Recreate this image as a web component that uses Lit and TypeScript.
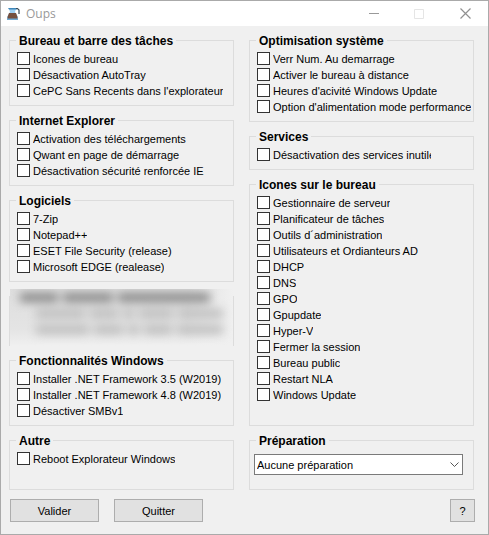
import { LitElement, html, css, nothing } from "lit";
import { customElement, property } from "lit/decorators.js";

interface Group {
  title: string;
  items: string[];
}

const LEFT_TOP: Group[] = [
  { title: "Bureau et barre des tâches", items: ["Icones de bureau", "Désactivation AutoTray", "CePC Sans Recents dans l'explorateur"] },
  { title: "Internet Explorer", items: ["Activation des téléchargements", "Qwant en page de démarrage", "Désactivation sécurité renforcée IE"] },
  { title: "Logiciels", items: ["7-Zip", "Notepad++", "ESET File Security (release)", "Microsoft EDGE (realease)"] },
];

const WINDOWS_FEATURES: Group = {
  title: "Fonctionnalités Windows",
  items: ["Installer .NET Framework 3.5 (W2019)", "Installer .NET Framework 4.8 (W2019)", "Désactiver SMBv1"],
};

const OTHER: Group = { title: "Autre", items: ["Reboot Explorateur Windows"] };

const SYSTEM: Group = {
  title: "Optimisation système",
  items: ["Verr Num. Au demarrage", "Activer le bureau à distance", "Heures d'acivité Windows Update", "Option d'alimentation mode performance"],
};

const SERVICES: Group = { title: "Services", items: ["Désactivation des services inutiles"] };

const DESKTOP: Group = {
  title: "Icones sur le bureau",
  items: [
    "Gestionnaire de serveur",
    "Planificateur de tâches",
    "Outils d´administration",
    "Utilisateurs et Ordianteurs AD",
    "DHCP",
    "DNS",
    "GPO",
    "Gpupdate",
    "Hyper-V",
    "Fermer la session",
    "Bureau public",
    "Restart NLA",
    "Windows Update",
  ],
};

@customElement("option-group")
export class OptionGroup extends LitElement {
  @property({ attribute: false }) group: Group | null = null;
  @property() heading = "";

  static styles = css`
    :host {
      display: flex;
      flex-direction: column;
    }
    .box {
      flex: 1;
      min-width: 0;
      margin: 0;
      padding: 3px 7px 6px;
      border: 1px solid #dcdcdc;
    }
    .legend {
      margin-left: -1px;
      padding: 2px 3px 0;
      font: bold 12px/13px "Liberation Sans", Arial, sans-serif;
      white-space: nowrap;
    }
    .row {
      display: flex;
      gap: 3px;
      height: 16px;
      width: fit-content;
      white-space: nowrap;
    }
    .check {
      appearance: none;
      flex: none;
      box-sizing: border-box;
      width: 13px;
      height: 13px;
      margin: 1px 0 0;
      border: 1px solid #333;
      background: #fff;
    }
    .check:checked {
      background: #333;
      box-shadow: inset 0 0 0 2px #fff;
    }
    .text {
      line-height: 17px;
      overflow: hidden;
    }
    :host([narrow]) .text {
      max-width: 158px;
    }
  `;

  render() {
    return html`
      <fieldset class="box">
        <legend class="legend">${this.group?.title ?? this.heading}</legend>
        ${this.group
          ? this.group.items.map(
              (item) => html`<label class="row"><input class="check" type="checkbox" /><span class="text">${item}</span></label>`
            )
          : nothing}
        <slot></slot>
      </fieldset>
    `;
  }
}

@customElement("app-root")
export class AppRoot extends LitElement {
  static styles = css`
    :host {
      display: block;
      font: 11px/16px "Liberation Sans", Arial, sans-serif;
      color: #000;
    }
    .window {
      box-sizing: border-box;
      min-height: 100vh;
      border: 1px solid #aaa;
      background: #f0f0f0;
    }
    .titlebar {
      display: flex;
      align-items: center;
      height: 25px;
      padding-left: 5px;
      background: #fff;
    }
    .title {
      flex: 1;
      margin: 0 0 0 6px;
      font: 12px/24px "Open Sans", "Noto Sans", sans-serif;
      color: #999;
    }
    .caption {
      display: flex;
      align-items: center;
      justify-content: center;
      width: 46px;
      height: 25px;
      padding: 0;
      border: 0;
      background: none;
    }
    .columns {
      display: grid;
      grid-template-columns: 1fr 1fr;
      gap: 15px;
      padding: 7px 14px 0 8px;
    }
    .column {
      display: flex;
      flex-direction: column;
      gap: 7px;
      min-width: 0;
    }
    .grow {
      flex: 1;
    }
    .last {
      min-height: 57px;
    }
    .redacted {
      box-sizing: border-box;
      height: 50px;
      margin: 7px 0 0;
      border: solid #dcdcdc;
      border-width: 0 1px;
    }
    .haze {
      height: 57px;
      margin-top: -7px;
      overflow: hidden;
      background: linear-gradient(90deg, #f0f0f000 80%, #f0f0f0), linear-gradient(#dedede, #e4e4e4 70%, #f0f0f0);
    }
    .lines {
      display: flex;
      flex-direction: column;
      gap: 7px;
      padding: 4px 10px;
      filter: blur(5px);
    }
    .words {
      display: flex;
      gap: 5px;
      height: 9px;
    }
    .words.indent {
      padding-left: 16px;
    }
    .word {
      background: #bebebe;
    }
    .dark .word {
      background: #888;
    }
    .combo {
      position: relative;
      display: block;
      margin: 3px 3px 0 -3px;
    }
    .select {
      appearance: none;
      box-sizing: border-box;
      display: block;
      width: 100%;
      height: 21px;
      padding: 0 20px 0 2px;
      border: 1px solid #7a7a7a;
      border-radius: 0;
      background: #fff;
      color: #000;
      font: inherit;
    }
    .chevron {
      position: absolute;
      right: 4px;
      top: 8px;
      pointer-events: none;
    }
    .actions {
      display: flex;
      gap: 15px;
      padding: 9px 13px 12px 9px;
    }
    .button {
      box-sizing: border-box;
      width: 89px;
      height: 23px;
      padding: 0;
      border: 1px solid #adadad;
      background: #e1e1e1;
      color: #000;
      font: inherit;
    }
    .help {
      width: 25px;
      margin-left: auto;
    }
  `;

  private words(kind: string, widths: number[]) {
    return html`<div class="words ${kind}">${widths.map((w) => html`<span class="word" style="width:${w}px"></span>`)}</div>`;
  }

  render() {
    return html`
      <main class="window">
        <header class="titlebar">
          <svg width="14" height="14" viewBox="0 0 14 14" aria-hidden="true">
            <path d="M3 2h7l-1 3 3 5v2H1v-2l3-5z" fill="#9fd0f2" />
            <path d="M2 1h9v1.500H3z" fill="#3f86b8" />
            <path d="M3 6h7l1.500 4v2h-10v-2z" fill="#75503f" />
            <path d="M1 11.500h11V13H1z" fill="#6fa9d3" />
            <path d="M10 1.500h1.500l1.500 1.500v4" fill="none" stroke="#3b4c58" stroke-width="1.200" />
          </svg>
          <h1 class="title">Oups</h1>
          <button class="caption" aria-label="Réduire">
            <svg width="11" height="11" viewBox="0 0 11 11"><path d="M1 5.500h10" stroke="#999" /></svg>
          </button>
          <button class="caption" aria-label="Agrandir" disabled>
            <svg width="10" height="10" viewBox="0 0 10 10"><path d="M.5.5h9v9h-9z" fill="none" stroke="#e5e5e5" /></svg>
          </button>
          <button class="caption" aria-label="Fermer">
            <svg width="11" height="11" viewBox="0 0 11 11"><path d="M.5.5l10 10M10.500.5l-10 10" stroke="#909090" stroke-width="1.2" /></svg>
          </button>
        </header>

        <div class="columns">
          <div class="column">
            ${LEFT_TOP.map((g) => html`<option-group .group=${g}></option-group>`)}
            <div class="redacted" aria-hidden="true">
              <div class="haze">
                <div class="lines">
                  ${this.words("dark", [38, 50, 92])}
                  ${this.words("indent", [50, 28, 12, 34, 46])}
                  ${this.words("indent", [56, 30, 12, 30, 48])}
                </div>
              </div>
            </div>
            <option-group .group=${WINDOWS_FEATURES}></option-group>
            <option-group class="last" .group=${OTHER}></option-group>
          </div>
          <div class="column">
            <option-group .group=${SYSTEM}></option-group>
            <option-group narrow .group=${SERVICES}></option-group>
            <option-group class="grow" .group=${DESKTOP}></option-group>
            <option-group class="last" heading="Préparation">
              <label class="combo">
                <select class="select" aria-label="Préparation">
                  <option>Aucune préparation</option>
                </select>
                <svg class="chevron" width="9" height="6" viewBox="0 0 9 6" aria-hidden="true">
                  <path d="M.5.5l4 4 4-4" fill="none" stroke="#555" />
                </svg>
              </label>
            </option-group>
          </div>
        </div>

        <footer class="actions">
          <button class="button">Valider</button>
          <button class="button">Quitter</button>
          <button class="button help" aria-label="Aide">?</button>
        </footer>
      </main>
    `;
  }
}
